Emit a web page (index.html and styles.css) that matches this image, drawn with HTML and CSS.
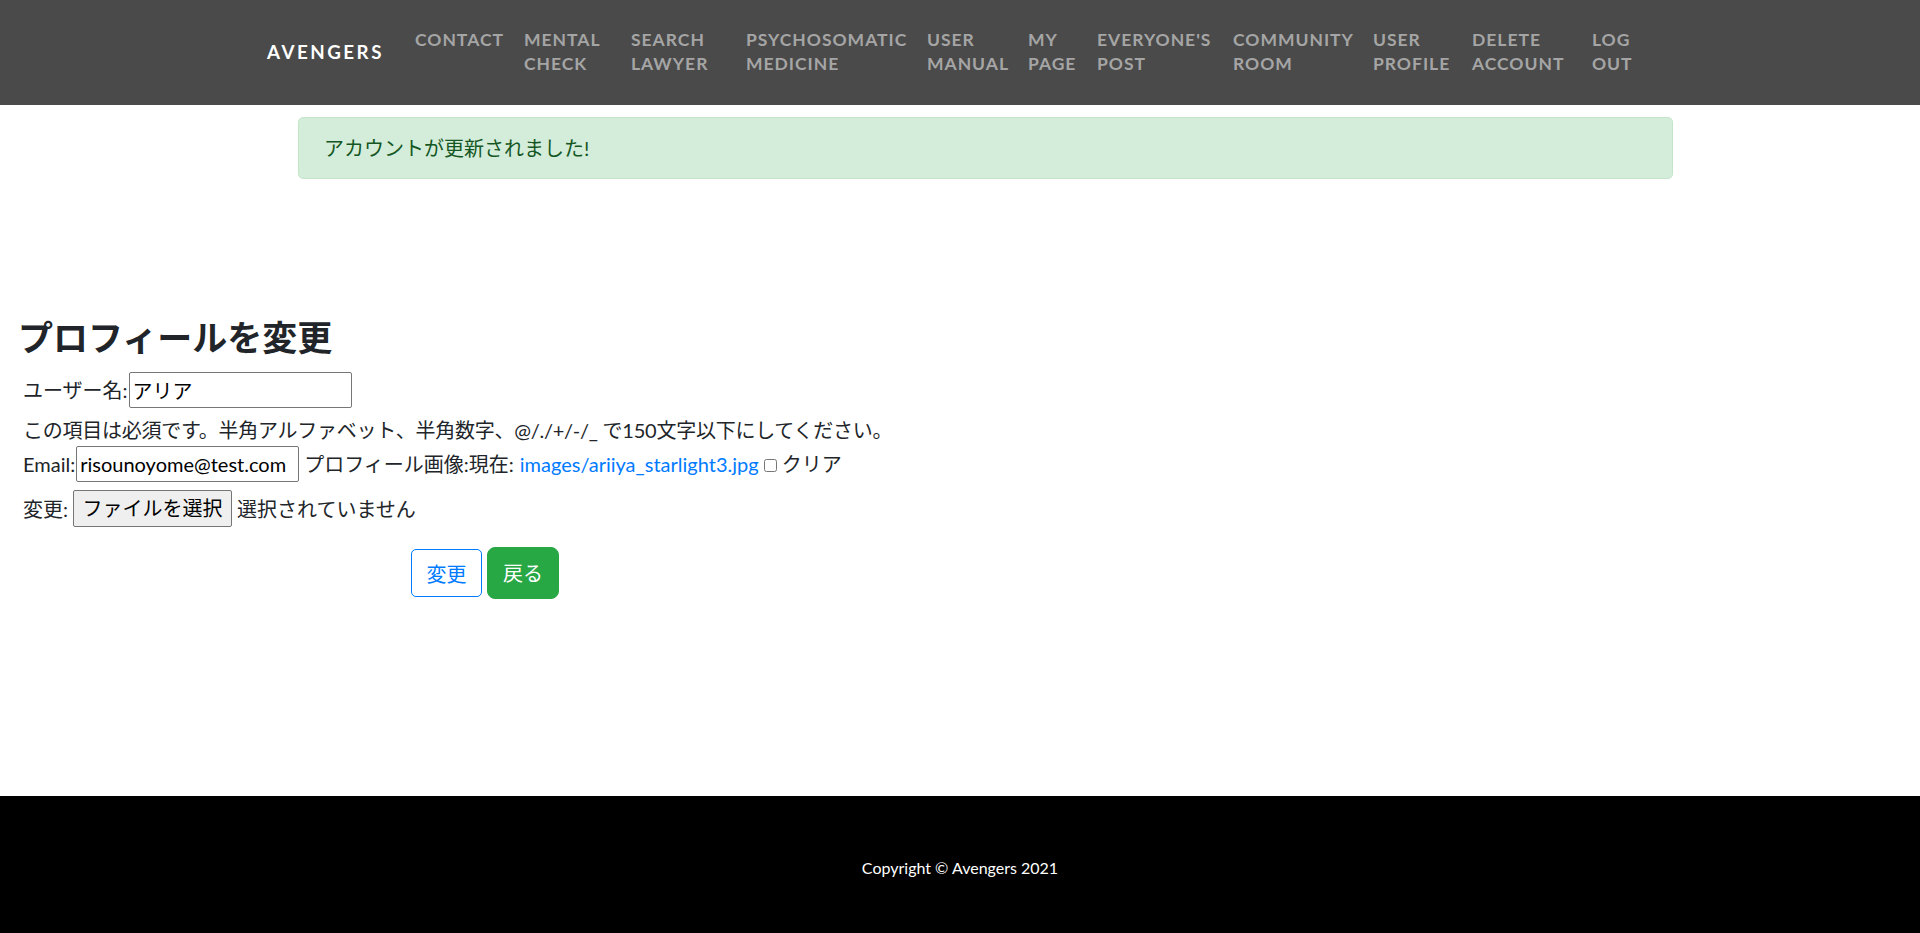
FILE: index.html
```html
<!DOCTYPE html>
<html lang="ja">
<head>
<meta charset="utf-8">
<title>プロフィールを変更</title>
<link rel="stylesheet" href="styles.css">
</head>
<body>
<header class="navbar">
  <div class="nav-container">
    <a class="brand" href="#">AVENGERS</a>
    <ul class="nav-list">
      <li class="nav-item"><a class="nav-link" href="#">CONTACT</a></li>
      <li class="nav-item"><a class="nav-link" href="#">MENTAL<br>CHECK</a></li>
      <li class="nav-item"><a class="nav-link" href="#">SEARCH<br>LAWYER</a></li>
      <li class="nav-item"><a class="nav-link" href="#">PSYCHOSOMATIC<br>MEDICINE</a></li>
      <li class="nav-item"><a class="nav-link" href="#">USER<br>MANUAL</a></li>
      <li class="nav-item"><a class="nav-link" href="#">MY<br>PAGE</a></li>
      <li class="nav-item"><a class="nav-link" href="#">EVERYONE'S<br>POST</a></li>
      <li class="nav-item"><a class="nav-link" href="#">COMMUNITY<br>ROOM</a></li>
      <li class="nav-item"><a class="nav-link" href="#">USER<br>PROFILE</a></li>
      <li class="nav-item"><a class="nav-link" href="#">DELETE<br>ACCOUNT</a></li>
      <li class="nav-item"><a class="nav-link" href="#">LOG<br>OUT</a></li>
    </ul>
  </div>
</header>

<main class="main">
  <div class="alert">アカウントが更新されました!</div>

  <section class="profile">
    <h3 class="title">プロフィールを変更</h3>
    <form class="form">
      <div class="row"><label class="label">ユーザー名:</label><input class="text-input" type="text" value="アリア"></div>
      <div class="help">この項目は必須です。半角アルファベット、半角数字、@/./+/-/_ で150文字以下にしてください。</div>
      <div class="row"><label class="label">Email:</label><input class="text-input" type="text" value="risounoyome@test.com"><span class="gap-text">プロフィール画像:現在:</span><a class="file-link" href="#">images/ariiya_starlight3.jpg</a><input class="check" type="checkbox"><span>クリア</span></div>
      <div class="row row-file"><span>変更:</span><span class="file-btn">ファイルを選択</span><span class="file-none">選択されていません</span></div>
      <div class="actions"><button class="btn btn-outline" type="button">変更</button><a class="btn btn-success" href="#">戻る</a></div>
    </form>
  </section>
</main>

<footer class="footer">Copyright © Avengers 2021</footer>
</body>
</html>
```

FILE: styles.css
```css
html, body {
  margin: 0;
  padding: 0;
}

body {
  font-family: Lato, "Noto Sans CJK JP", sans-serif;
  font-size: 20px;
  line-height: 1.5;
  color: #212529;
  background: #fff;
  min-height: 100vh;
  display: flex;
  flex-direction: column;
}

a {
  text-decoration: none;
}

/* ---------- Navbar ---------- */
.navbar {
  background: #4a4a4a;
  height: 105px;
  display: flex;
  align-items: center;
}

.nav-container {
  width: 1386px;
  margin: 0 auto;
  display: flex;
  align-items: center;
}

.brand {
  color: #fff;
  font-weight: 700;
  font-size: 18.75px;
  letter-spacing: 2.5px;
  line-height: 1.5;
  white-space: nowrap;
}

.nav-list {
  list-style: none;
  margin: -2px 0 0 20px;
  padding: 0;
  display: grid;
  grid-template-columns: 109px 107px 115px 181px 101px 69px 136px 140px 99px 120px auto;
  align-items: start;
}

.nav-link {
  display: block;
  padding: 0 11px;
  color: #a5a5a5;
  font-weight: 700;
  font-size: 17.5px;
  letter-spacing: 1px;
  line-height: 23.5px;
  white-space: nowrap;
}

/* ---------- Main ---------- */
.main {
  flex: 1 0 auto;
}

.alert {
  margin: 12px 0 0 298px;
  width: 1375px;
  box-sizing: border-box;
  padding: 15px 25px;
  background: #d4edda;
  border: 1px solid #c3e6cb;
  border-radius: 5px;
  color: #155724;
  line-height: 30px;
}

.profile {
  padding-left: 18px;
}

.title {
  margin: 137px 0 14px;
  font-size: 35px;
  line-height: 1.2;
  font-weight: 700;
  color: #212529;
}

.form {
  padding-left: 5px;
}

.row {
  display: flex;
  align-items: center;
  white-space: nowrap;
}

.label {
  display: inline-block;
}

.text-input {
  width: 223px;
  height: 36px;
  box-sizing: border-box;
  border: 1px solid #767676;
  border-radius: 2px;
  padding: 1px 3px;
  font: inherit;
  font-size: 20px;
  color: #000;
  margin: 0 0 0 1px;
}

.help {
  line-height: 30px;
  margin: 7px 0 1px;
  letter-spacing: -0.25px;
}

.gap-text {
  margin-left: 5px;
}

.file-link {
  color: #007bff;
  margin-left: 6px;
}

.check {
  width: 13px;
  height: 13px;
  margin: 2px 5px 0 5px;
}

.row-file {
  margin-top: 8px;
}

.file-btn {
  display: inline-block;
  height: 37px;
  box-sizing: border-box;
  line-height: 35px;
  padding: 0 8.5px;
  background: #efefef;
  border: 1px solid #767676;
  border-radius: 2px;
  color: #000;
  margin-left: 5px;
}

.file-none {
  margin-left: 5px;
}

.actions {
  display: flex;
  align-items: center;
  gap: 5px;
  margin: 20px 0 0 388px;
}

.btn {
  display: inline-flex;
  align-items: center;
  justify-content: center;
  box-sizing: border-box;
  font-family: inherit;
  font-size: 20px;
  padding: 0;
  cursor: pointer;
}

.btn-outline {
  width: 71px;
  height: 48px;
  background: #fff;
  color: #007bff;
  border: 1px solid #007bff;
  border-radius: 5px;
}

.btn-success {
  width: 72px;
  height: 52px;
  background: #28a745;
  color: #fff;
  border: 1px solid #28a745;
  border-radius: 8px;
}

/* ---------- Footer ---------- */
.footer {
  background: #000;
  color: #fff;
  font-size: 16px;
  line-height: 24px;
  text-align: center;
  height: 137px;
  box-sizing: border-box;
  padding-top: 60px;
}
```
